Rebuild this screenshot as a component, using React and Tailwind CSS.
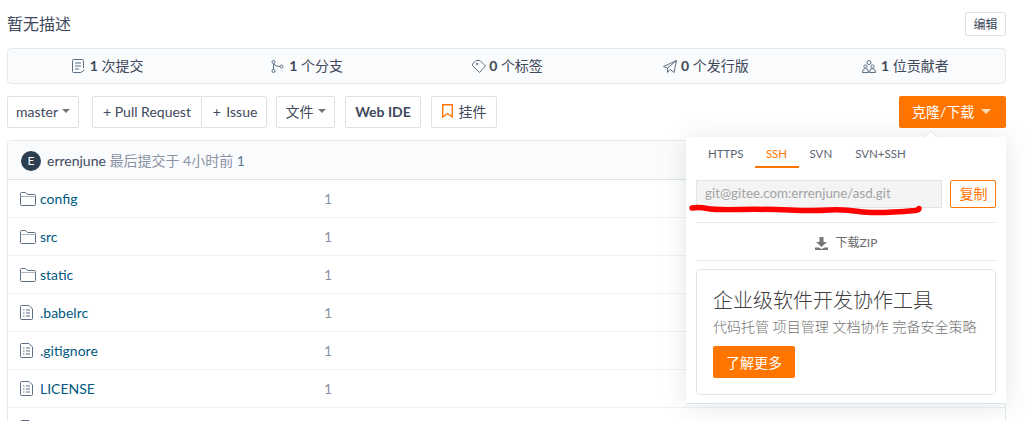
function FolderIcon() {
  return (
    <svg width="16" height="14" viewBox="0 0 16 14" fill="none" stroke="#5c6f85" strokeWidth="1" className="shrink-0">
      <path d="M0.5 12.5V1.5Q0.5 0.5 1.5 0.5H5.5L7.5 2.5H14.5Q15.5 2.5 15.5 3.5V12.5Q15.5 13.5 14.5 13.5H1.5Q0.5 13.5 0.5 12.5Z" />
      <path d="M0.5 4.5H15.5" stroke="#a9b4c0" />
    </svg>
  );
}
function FileIcon() {
  return (
    <svg width="13" height="15" viewBox="0 0 13 15" fill="none" stroke="#5c6f85" strokeWidth="1" className="shrink-0">
      <path d="M0.5 1.5Q0.5 0.5 1.5 0.5H9L12.5 4V13.5Q12.5 14.5 11.5 14.5H1.5Q0.5 14.5 0.5 13.5Z" />
      <path d="M3 5H4.5M6 5H10M3 8H4.5M6 8H10M3 11H4.5M6 11H10" />
    </svg>
  );
}
function CommitIcon() {
  return (
    <svg width="13" height="15" viewBox="0 0 13 15" fill="none" stroke="#5c6f85" strokeWidth="1" className="shrink-0">
      <path d="M11.5 9V1.5Q11.5 0.5 10.5 0.5H1.5Q0.5 0.5 0.5 1.5V12.5Q0.5 13.5 1.5 13.5H8" />
      <path d="M3 4H9M3 7H9M3 10H7" />
      <path d="M8 14L12.5 11" />
    </svg>
  );
}
function BranchIcon() {
  return (
    <svg width="13" height="13" viewBox="0 0 13 13" fill="none" stroke="#5c6f85" strokeWidth="1" className="shrink-0">
      <circle cx="2.5" cy="2" r="1.5" />
      <circle cx="2.5" cy="11" r="1.5" />
      <circle cx="10.5" cy="6.5" r="1.5" />
      <path d="M2.5 3.5V9.5M3 4Q4 6.5 9 6.5" />
    </svg>
  );
}
function TagIcon() {
  return (
    <svg width="14" height="13" viewBox="0 0 14 13" fill="none" stroke="#5c6f85" strokeWidth="1" className="shrink-0">
      <path d="M0.5 4L4 0.5H8L13.5 6L7.5 12.5L0.5 5.5Z" />
      <circle cx="5" cy="4" r="0.8" />
    </svg>
  );
}
function PlaneIcon() {
  return (
    <svg width="14" height="13" viewBox="0 0 14 13" fill="none" stroke="#5c6f85" strokeWidth="1" className="shrink-0">
      <path d="M13.5 0.5L0.5 6.5L4.5 8L13.5 0.5L11 12.5L7 9.5" />
      <path d="M4.5 8V12.5L7 9.5" />
    </svg>
  );
}
function PeopleIcon() {
  return (
    <svg width="14" height="13" viewBox="0 0 14 13" fill="none" stroke="#5c6f85" strokeWidth="1" className="shrink-0">
      <circle cx="7" cy="2.5" r="2" />
      <circle cx="3.5" cy="6.5" r="1.6" />
      <circle cx="10.5" cy="6.5" r="1.6" />
      <path d="M0.5 12.5Q0.5 8.5 3.5 8.5Q6.5 8.5 6.5 12.5ZM7.5 12.5Q7.5 8.5 10.5 8.5Q13.5 8.5 13.5 12.5Z" />
    </svg>
  );
}
function Caret({ color = "#767676", big = false }) {
  return (
    <span
      className={big ? "w-0 h-0 border-x-[5px] border-x-transparent border-t-[5px] inline-block" : "w-0 h-0 border-x-[4px] border-x-transparent border-t-[4px] inline-block"}
      style={{ borderTopColor: color }}
    />
  );
}
function Stat({ icon, n, label, gap }) {
  return (
    <div className={`w-[200px] flex items-center justify-center text-[14px] text-[#40485b] ${gap}`}>
      {icon}
      <span className="-translate-y-px"><b className="font-bold">{n}</b> {label}</span>
    </div>
  );
}
const btn = "h-[32px] flex items-center justify-center pb-[2px] border border-[#dce3e8] rounded-[2px] bg-white text-[14px] text-[#40485b]";
const rows = [
  ["folder", "config"], ["folder", "src"], ["folder", "static"],
  ["file", ".babelrc"], ["file", ".gitignore"], ["file", "LICENSE"],
];
export default function App() {
  return (
    <div className="w-[1027px] h-[421px] overflow-hidden bg-white pl-[7px] pr-[21px] text-[#40485b] font-['Lato','Noto_Sans_CJK_SC',sans-serif]">
      <div className="h-[48px] flex items-start justify-between pt-[12px]">
        <span className="text-[16px] leading-[24px]">暂无描述</span>
        <span className="w-[41px] h-[24px] flex items-center justify-center pt-[2px] border border-[#dce3e8] rounded-[2px] text-[12px]">编辑</span>
      </div>
      <div className="h-[36px] flex border border-[#e3e9ed] rounded-[4px] bg-[#fafbfc]">
        <Stat icon={<CommitIcon />} n="1" label="次提交" gap="gap-[5px]" />
        <Stat icon={<BranchIcon />} n="1" label="个分支" gap="gap-[5px]" />
        <Stat icon={<TagIcon />} n="0" label="个标签" gap="gap-[3px] pl-[2px]" />
        <Stat icon={<PlaneIcon />} n="0" label="个发行版" gap="gap-[4px]" />
        <Stat icon={<PeopleIcon />} n="1" label="位贡献者" gap="gap-[5px]" />
      </div>
      <div className="relative mt-[12px] flex items-center">
        <div className={`${btn} w-[72px] gap-[4px]`}>master <Caret /></div>
        <div className="ml-[13px] flex">
          <div className={`${btn} w-[110px] rounded-r-none`}>+ Pull Request</div>
          <div className={`${btn} w-[65px] pl-[2px] rounded-l-none border-l-0 [word-spacing:2px]`}>+ Issue</div>
        </div>
        <div className={`${btn} ml-[9px] w-[59px] gap-[4px]`}>文件 <Caret /></div>
        <div className={`${btn} ml-[10px] w-[76px] font-bold`}>Web IDE</div>
        <div className={`${btn} ml-[10px] w-[66px] gap-[6px]`}>
          <svg width="11" height="14" viewBox="0 0 11 14" fill="none" stroke="#ff7500" strokeWidth="1.4"><path d="M0.7 0.7H10.3V13L5.5 9.5L0.7 13Z" /></svg>
          挂件
        </div>
        <div className="ml-auto w-[107px] h-[32px] flex items-center pl-[13px] pb-[2px] gap-[7px] rounded-[2px] bg-[#ff7500] text-white text-[14px]">
          克隆/下载 <Caret big color="#ffd9b3" />
        </div>
        <div className="absolute z-10 right-0 top-[41px] w-[320px] h-[267px] bg-white border-b border-[#dce3e8] shadow-[0_2px_24px_rgba(40,60,80,0.13)] px-[10px]">
          <div className="absolute right-[70px] -top-[5px] w-[10px] h-[10px] rotate-45 bg-white border-l border-t border-[#e3e9ed]" />
          <div className="flex h-[31px] text-[11.5px] leading-[16px] text-[#5c6470] pl-[12px]">
            <span className="pt-[9px]">HTTPS</span>
            <span className="ml-[11px] w-[44px] h-[31px] pt-[9px] text-center text-[#ff7500] border-b-[2px] border-[#ff7500]">SSH</span>
            <span className="ml-[11px] pt-[9px]">SVN</span>
            <span className="ml-[23px] pt-[9px]">SVN+SSH</span>
          </div>
          <div className="mt-[12px] flex justify-between">
            <div className="w-[246px] h-[28px] flex items-center pl-[8px] bg-[#f4f4f4] border border-[#e3e3e3] text-[13.33px] text-[#a3a3a3]">git@gitee.com:errenjune/asd.git</div>
            <div className="w-[46px] h-[28px] flex items-center justify-center pl-[1px] pb-[2px] border border-[#ff7500] rounded-[2px] text-[14px] text-[#ff7500]">复制</div>
          </div>
          <div className="mt-[14px] h-[39px] pt-[3px] border-y border-[#e8e8e8] flex items-center justify-center gap-[8px] text-[12px] text-[#6a6a6a]">
            <svg width="13" height="13" viewBox="0 0 13 13" fill="#767676"><path d="M4.5 0H8.5V5H12L6.5 10L1 5H4.5Z" /><path d="M0 10.5H3.5L6.5 12L9.5 10.5H13V13H0Z" /></svg>
            下载ZIP
          </div>
          <div className="mt-[8px] h-[126px] border border-[#e3e3e3] rounded-[4px] pl-[16px] pt-[16px]">
            <div className="text-[20px] leading-[28px] font-light text-[#404040]">企业级软件开发协作工具</div>
            <div className="mt-[3px] text-[14px] leading-[20px] font-light text-[#737373]">代码托管 项目管理 文档协作 完备安全策略</div>
            <div className="mt-[9px] w-[82px] h-[32px] flex items-center justify-center rounded-[2px] bg-[#ff7500] text-white text-[14px]">了解更多</div>
          </div>
          <svg className="absolute left-[3px] top-[67px]" width="240" height="16" viewBox="0 0 240 16" fill="none" stroke="#ff0000" strokeWidth="5.5" strokeLinecap="round" strokeLinejoin="round">
            <path d="M3 4Q10 3 18 4.5T50 5.5T100 6T140 6T170 7.5T226 6.5Q230 6 230 4.5" />
          </svg>
        </div>
      </div>
      <div className="mt-[12px] border border-[#e3e9ed] rounded-t-[4px]">
        <div className="h-[39px] flex items-center pl-[13px] gap-[6px] border-b border-[#dce3e8] bg-[#fafbfc] text-[14px] text-[#8c92a4]">
          <span className="w-[20px] h-[20px] mt-[2px] rounded-full bg-[#2c3e50] text-white text-[12px] flex items-center justify-center">E</span>
          <span><span className="text-[#40485b]">errenjune</span> 最后提交于 4小时前 <span className="text-[#5c7a99]">1</span></span>
        </div>
        {rows.map(([kind, name]) => (
          <div key={name} className="h-[38px] flex items-center pl-[12px] border-b border-[#eef1f4] text-[14px]">
            <span className="w-[20px] flex">{kind === "folder" ? <FolderIcon /> : <FileIcon />}</span>
            <span className="w-[284px] text-[#005980]">{name}</span>
            <span className="text-[#8c92a4]">1</span>
          </div>
        ))}
        <div className="h-[38px] flex items-center pl-[12px]">
          <FileIcon />
        </div>
      </div>
    </div>
  );
}
